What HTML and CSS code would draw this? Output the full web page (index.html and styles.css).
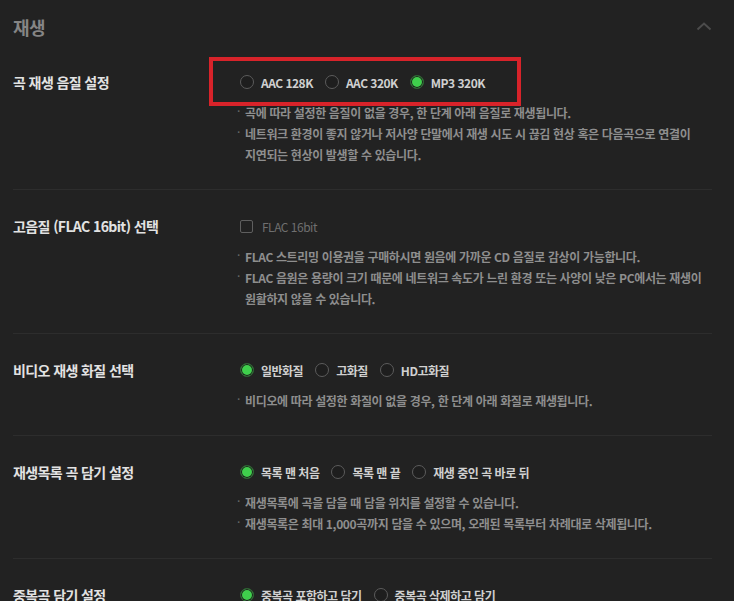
FILE: index.html
```html
<!DOCTYPE html>
<html lang="ko">
<head>
<meta charset="UTF-8">
<title>설정 - 재생</title>
<link rel="stylesheet" href="styles.css">
</head>
<body>

<div class="section">
    <div class="section-head">
        <h2>재생</h2>
        <svg class="fold" width="16" height="10" viewBox="0 0 16 10"><path d="M1.5 8.5 L8 2.5 L14.5 8.5" fill="none" stroke="#4c4c4c" stroke-width="2"/></svg>
    </div>

    <div class="row">
        <div class="label">곡 재생 음질 설정</div>
        <div class="body">
            <div class="opts hilite">
                <span class="opt"><i class="radio"></i>AAC 128K</span>
                <span class="opt"><i class="radio"></i>AAC 320K</span>
                <span class="opt"><i class="radio on"></i>MP3 320K</span>
            </div>
            <ul class="notes">
                <li>곡에 따라 설정한 음질이 없을 경우, 한 단계 아래 음질로 재생됩니다.</li>
                <li>네트워크 환경이 좋지 않거나 저사양 단말에서 재생 시도 시 끊김 현상 혹은 다음곡으로 연결이 지연되는 현상이 발생할 수 있습니다.</li>
            </ul>
        </div>
    </div>

    <div class="row">
        <div class="label">고음질 (FLAC 16bit) 선택</div>
        <div class="body">
            <div class="opts">
                <span class="opt off"><i class="check"></i>FLAC 16bit</span>
            </div>
            <ul class="notes">
                <li>FLAC 스트리밍 이용권을 구매하시면 원음에 가까운 CD 음질로 감상이 가능합니다.</li>
                <li>FLAC 음원은 용량이 크기 때문에 네트워크 속도가 느린 환경 또는 사양이 낮은 PC에서는 재생이 원활하지 않을 수 있습니다.</li>
            </ul>
        </div>
    </div>

    <div class="row">
        <div class="label">비디오 재생 화질 선택</div>
        <div class="body">
            <div class="opts">
                <span class="opt"><i class="radio on"></i>일반화질</span>
                <span class="opt"><i class="radio"></i>고화질</span>
                <span class="opt"><i class="radio"></i>HD고화질</span>
            </div>
            <ul class="notes">
                <li>비디오에 따라 설정한 화질이 없을 경우, 한 단계 아래 화질로 재생됩니다.</li>
            </ul>
        </div>
    </div>

    <div class="row">
        <div class="label">재생목록 곡 담기 설정</div>
        <div class="body">
            <div class="opts">
                <span class="opt"><i class="radio on"></i>목록 맨 처음</span>
                <span class="opt"><i class="radio"></i>목록 맨 끝</span>
                <span class="opt"><i class="radio"></i>재생 중인 곡 바로 뒤</span>
            </div>
            <ul class="notes">
                <li>재생목록에 곡을 담을 때 담을 위치를 설정할 수 있습니다.</li>
                <li>재생목록은 최대 1,000곡까지 담을 수 있으며, 오래된 목록부터 차례대로 삭제됩니다.</li>
            </ul>
        </div>
    </div>

    <div class="row">
        <div class="label">중복곡 담기 설정</div>
        <div class="body">
            <div class="opts">
                <span class="opt"><i class="radio on"></i>중복곡 포함하고 담기</span>
                <span class="opt"><i class="radio"></i>중복곡 삭제하고 담기</span>
            </div>
        </div>
    </div>
</div>

</body>
</html>
```

FILE: styles.css
```css
body
{
    margin: 0;
    padding: 0;
    background-color: #222222;
    font-family: "Noto Sans CJK KR", "Noto Sans", sans-serif;
    overflow: hidden;
}

.section
{
    width: 699px;
    margin-left: 13px;
}

.section-head
{
    height: 46px;
    display: flex;
    justify-content: space-between;
    align-items: center;
}

.section-head h2
{
    margin: 0;
    padding-top: 8px;
    font-size: 18px;
    font-weight: bold;
    color: #858585;
    letter-spacing: -0.5px;
}

.fold
{
    margin-top: 6px;
}

.row
{
    display: flex;
    padding: 26px 0 24px 0;
    border-bottom: 1px solid #2d2d2d;
}

.label
{
    width: 224px;
    flex-shrink: 0;
    line-height: 20px;
    font-size: 14px;
    font-weight: bold;
    color: #e2e2e2;
    letter-spacing: -0.6px;
}

.body
{
    flex: 1;
}

.opts
{
    display: flex;
    align-items: center;
    height: 20px;
    padding-left: 3px;
}

/* red box drawn round the first option group */
.hilite
{
    position: relative;
}

.hilite::before
{
    content: "";
    position: absolute;
    left: -28px;
    top: -15px;
    width: 304px;
    height: 41px;
    border: 4px solid #d8232a;
}

.opt
{
    display: flex;
    align-items: center;
    margin-right: 12px;
    font-size: 12px;
    font-weight: bold;
    color: #d0d0d0;
    letter-spacing: -0.5px;
}

.opt.off
{
    color: #6f6f6f;
    font-weight: normal;
}

.radio
{
    width: 12px;
    height: 12px;
    margin-right: 7px;
    border: 1px solid #5c5c5c;
    border-radius: 50%;
    background-color: #1e1e1e;
}

.radio.on
{
    background-color: #3fcf4c;
    border: 1px solid #2f5f33;
    box-shadow: inset 0 0 0 1px #1c1c1c;
}

.check
{
    width: 11px;
    height: 11px;
    margin-right: 9px;
    border: 1px solid #5f5f5f;
    border-radius: 2px;
}

.notes
{
    list-style: none;
    margin: 10px 0 0 0;
    padding: 0;
    word-break: keep-all;
}

.notes li
{
    position: relative;
    padding-left: 8px;
    line-height: 21px;
    font-size: 12px;
    font-weight: bold;
    color: #8e8e8e;
    letter-spacing: -0.35px;
}

.notes li::before
{
    content: "·";
    position: absolute;
    left: 0;
    top: -2px;
    color: #6a6a6a;
    font-weight: normal;
}
```
